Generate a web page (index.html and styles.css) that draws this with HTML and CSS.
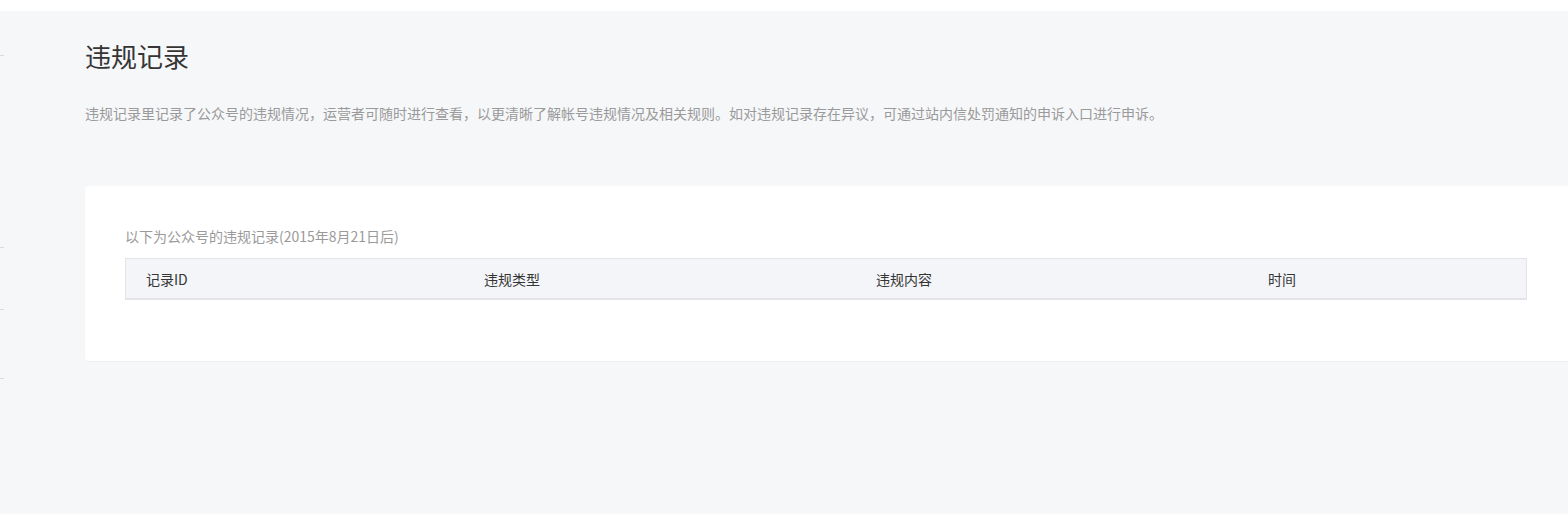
FILE: index.html
```html
<!DOCTYPE html>
<html lang="zh-CN">
<head>
<meta charset="utf-8">
<title>违规记录</title>
<link rel="stylesheet" href="styles.css">
</head>
<body>
<div class="topbar"></div>
<div class="page">
  <span class="tick t1"></span>
  <span class="tick t2"></span>
  <span class="tick t3"></span>
  <span class="tick t4"></span>
  <main class="main">
    <h1 class="title">违规记录</h1>
    <p class="desc">违规记录里记录了公众号的违规情况，运营者可随时进行查看，以更清晰了解帐号违规情况及相关规则。如对违规记录存在异议，可通过站内信处罚通知的申诉入口进行申诉。</p>
    <section class="card">
      <p class="card-tip">以下为公众号的违规记录(2015年8月21日后)</p>
      <div class="table-head">
        <div class="col c1">记录ID</div>
        <div class="col c2">违规类型</div>
        <div class="col c3">违规内容</div>
        <div class="col c4">时间</div>
      </div>
    </section>
  </main>
</div>
</body>
</html>
```

FILE: styles.css
```css
html, body {
  margin: 0;
  padding: 0;
  height: 100%;
}
body {
  background: #f6f7f9;
  font-family: "Noto Sans CJK SC", "Noto Sans", sans-serif;
  color: #353535;
  overflow: hidden;
}
.topbar {
  height: 11px;
  background: #ffffff;
}
.page {
  position: relative;
  height: 503px;
}
.tick {
  position: absolute;
  left: 0;
  width: 4px;
  height: 1px;
  background: #d9dadc;
}
.t1 { top: 44px; }
.t2 { top: 236px; }
.t3 { top: 298px; }
.t4 { top: 367px; }
.main {
  padding-left: 85px;
  padding-top: 27px;
}
.title {
  margin: 0;
  font-size: 26px;
  font-weight: normal;
  line-height: 36px;
  color: #353535;
}
.desc {
  margin: 29px 0 0;
  font-size: 14px;
  line-height: 20px;
  color: #9a9a9a;
}
.card {
  margin-top: 63px;
  background: #ffffff;
  border-radius: 4px 0 0 4px;
  box-shadow: 0 1px 2px rgba(0, 0, 0, 0.04);
  padding: 39px 41px 61px 40px;
}
.card-tip {
  margin: 0 0 11px;
  font-size: 14px;
  line-height: 22px;
  color: #9a9a9a;
}
.table-head {
  display: flex;
  height: 39px;
  background: #f4f5f9;
  border: 1px solid #e4e4e8;
  border-bottom-width: 2px;
  font-size: 14px;
  align-items: center;
  color: #353535;
}
.col {
  padding-left: 20px;
  box-sizing: border-box;
}
.c1 { width: 338px; }
.c2 { width: 392px; }
.c3 { width: 392px; }
.c4 { flex: 1; }
```
